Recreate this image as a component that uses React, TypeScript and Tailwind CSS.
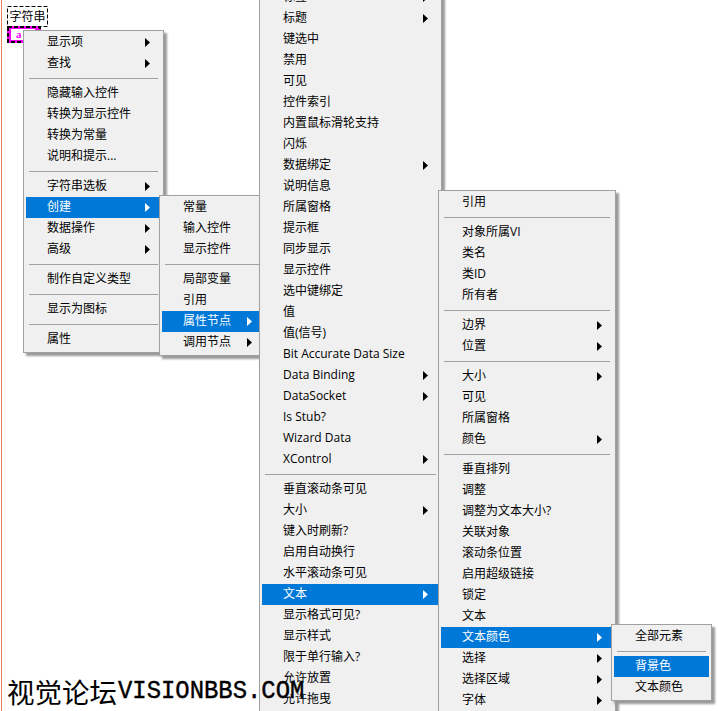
const cjk = "font-['Open_Sans','Noto_Sans_CJK_SC',sans-serif]"

type Row = { t: string; arrow?: boolean; active?: boolean } | 'sep'

const m1: Row[] = [
  { t: '显示项', arrow: true },
  { t: '查找', arrow: true },
  'sep',
  { t: '隐藏输入控件' },
  { t: '转换为显示控件' },
  { t: '转换为常量' },
  { t: '说明和提示...' },
  'sep',
  { t: '字符串选板', arrow: true },
  { t: '创建', arrow: true, active: true },
  { t: '数据操作', arrow: true },
  { t: '高级', arrow: true },
  'sep',
  { t: '制作自定义类型' },
  'sep',
  { t: '显示为图标' },
  'sep',
  { t: '属性' },
]

const m2: Row[] = [
  { t: '常量' },
  { t: '输入控件' },
  { t: '显示控件' },
  'sep',
  { t: '局部变量' },
  { t: '引用' },
  { t: '属性节点', arrow: true, active: true },
  { t: '调用节点', arrow: true },
]

const m3: Row[] = [
  { t: '标签', arrow: true },
  { t: '标题', arrow: true },
  { t: '键选中' },
  { t: '禁用' },
  { t: '可见' },
  { t: '控件索引' },
  { t: '内置鼠标滑轮支持' },
  { t: '闪烁' },
  { t: '数据绑定', arrow: true },
  { t: '说明信息' },
  { t: '所属窗格' },
  { t: '提示框' },
  { t: '同步显示' },
  { t: '显示控件' },
  { t: '选中键绑定' },
  { t: '值' },
  { t: '值(信号)' },
  { t: 'Bit Accurate Data Size' },
  { t: 'Data Binding', arrow: true },
  { t: 'DataSocket', arrow: true },
  { t: 'Is Stub?' },
  { t: 'Wizard Data' },
  { t: 'XControl', arrow: true },
  'sep',
  { t: '垂直滚动条可见' },
  { t: '大小', arrow: true },
  { t: '键入时刷新?' },
  { t: '启用自动换行' },
  { t: '水平滚动条可见' },
  { t: '文本', arrow: true, active: true },
  { t: '显示格式可见?' },
  { t: '显示样式' },
  { t: '限于单行输入?' },
  { t: '允许放置' },
  { t: '允许拖曳' },
]

const m4: Row[] = [
  { t: '引用' },
  'sep',
  { t: '对象所属VI' },
  { t: '类名' },
  { t: '类ID' },
  { t: '所有者' },
  'sep',
  { t: '边界', arrow: true },
  { t: '位置', arrow: true },
  'sep',
  { t: '大小', arrow: true },
  { t: '可见' },
  { t: '所属窗格' },
  { t: '颜色', arrow: true },
  'sep',
  { t: '垂直排列' },
  { t: '调整' },
  { t: '调整为文本大小?' },
  { t: '关联对象' },
  { t: '滚动条位置' },
  { t: '启用超级链接' },
  { t: '锁定' },
  { t: '文本' },
  { t: '文本颜色', arrow: true, active: true },
  { t: '选择', arrow: true },
  { t: '选择区域', arrow: true },
  { t: '字体', arrow: true },
]

const m5: Row[] = [
  { t: '全部元素' },
  'sep',
  { t: '背景色', active: true },
  { t: '文本颜色' },
]

function MenuRows({ rows }: { rows: Row[] }) {
  return (
    <>
      {rows.map((r, i) =>
        r === 'sep' ? (
          <div key={i} className="flex h-[9px] items-center px-[3px]">
            <div className="h-px w-full bg-[#a0a0a0]" />
          </div>
        ) : (
          <div
            key={i}
            className={`relative flex h-[21px] items-center pb-[2px] pl-[21px] text-[12px] leading-[19px] whitespace-nowrap ${
              r.active ? 'bg-[#0078d7] text-white' : 'text-black'
            }`}
          >
            {r.t}
            {r.arrow && (
              <svg className="absolute right-[11px] top-[6px]" width="5" height="9" viewBox="0 0 5 9">
                <path d="M0 0L5 4.5L0 9Z" fill={r.active ? '#fff' : '#000'} />
              </svg>
            )}
          </div>
        ),
      )}
    </>
  )
}

function Dashed({ w, h, sw }: { w: number; h: number; sw: number }) {
  return (
    <svg className="absolute inset-0" width={w} height={h}>
      <rect x={sw / 2} y={sw / 2} width={w - sw} height={h - sw} fill="none" stroke="#000" strokeWidth={sw} strokeDasharray="4 2" />
    </svg>
  )
}

export default function App() {
  return (
    <div className={`relative h-[711px] w-[718px] overflow-hidden bg-white ${cjk}`}>
      <div className="absolute inset-y-0 left-px w-px bg-[#e8825c]" />

      {/* label + string control */}
      <div className="absolute left-[7px] top-[6px] flex h-[21px] w-[41px] items-center justify-center text-[12px] text-black">
        <Dashed w={41} h={21} sw={1} />
        字符串
      </div>
      <div className="absolute left-[7px] top-[26px] h-[17px] w-[34px] bg-[#ff00ff] px-[4px] py-[3px]">
        <Dashed w={34} h={17} sw={2} />
        <div className="flex h-full w-[24px] items-center bg-white pl-[5px] font-['Liberation_Serif',serif] text-[11px] leading-none font-bold text-[#ff00ff]">
          a
        </div>
      </div>

      <div className="absolute left-[23px] top-[30px] w-[141px] border border-[#a0a0a0] bg-[#f0f0f0] px-[2px] pt-px pb-[2px] shadow-[3px_3px_2px_#9a9a9a]">
        <MenuRows rows={m1} />
      </div>
      <div className="absolute left-[159px] top-[195px] w-[107px] border border-[#a0a0a0] bg-[#f0f0f0] px-[2px] pt-px pb-[2px] shadow-[3px_3px_2px_#9a9a9a]">
        <MenuRows rows={m2} />
      </div>
      <div className="absolute left-[259px] top-[-15px] w-[183px] border border-[#a0a0a0] bg-[#f0f0f0] px-[2px] pt-px pb-[2px] shadow-[3px_3px_2px_#9a9a9a]">
        <MenuRows rows={m3} />
      </div>
      <div className="absolute left-[438px] top-[190px] w-[178px] border border-[#a0a0a0] bg-[#f0f0f0] px-[2px] pt-px pb-[2px] shadow-[3px_3px_2px_#9a9a9a]">
        <MenuRows rows={m4} />
      </div>
      <div className="absolute left-[611px] top-[624px] w-[101px] border border-[#a0a0a0] bg-[#f0f0f0] px-[2px] pt-px pb-[2px] shadow-[3px_3px_2px_#9a9a9a]">
        <MenuRows rows={m5} />
      </div>

      {/* watermark */}
      <div className="absolute left-[7px] top-[672px] flex items-center text-[27.5px] leading-[38px] whitespace-nowrap text-black">
        <span className="font-['Noto_Sans_CJK_SC',sans-serif]">视觉论坛</span>
        <span className="ml-px inline-block origin-center scale-y-110 font-['Liberation_Mono',monospace] text-[23.9px] [-webkit-text-stroke:0.4px_#000]">
          VISIONBBS.COM
        </span>
      </div>
    </div>
  )
}
